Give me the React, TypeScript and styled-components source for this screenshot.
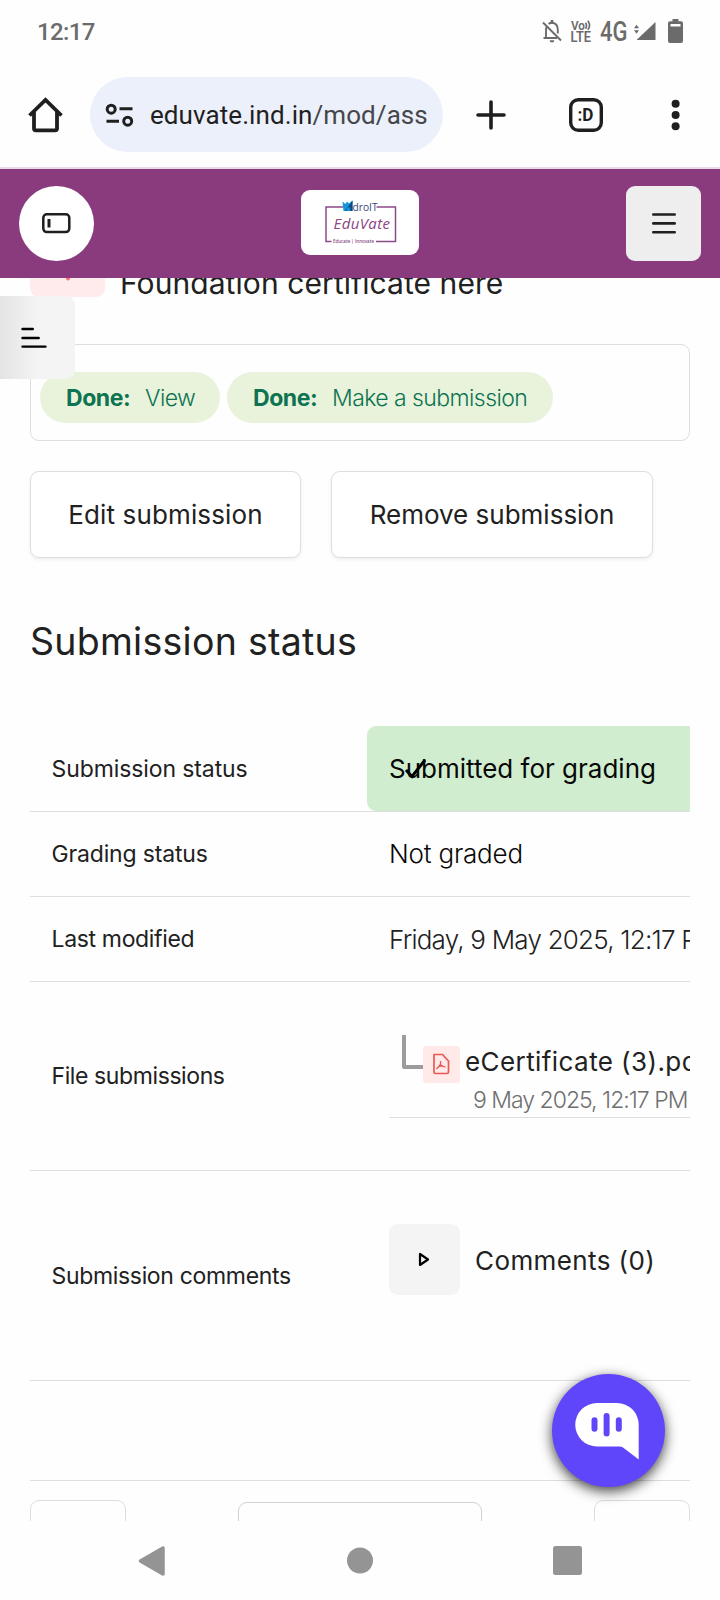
import React from 'react';
import styled, { createGlobalStyle } from 'styled-components';

const GlobalStyle = createGlobalStyle`
  * { box-sizing: border-box; }
  body { margin: 0; background: #fff; }
  svg { display: block; flex: none; }
  button { font: inherit; margin: 0; padding: 0; }
`;

const Screen = styled.div`
  width: 720px;
  height: 1600px;
  display: flex;
  flex-direction: column;
  background: #fefefe;
  color: #212121;
  font-family: Inter, 'Noto Sans', sans-serif;
  overflow: hidden;
`;

const StatusBar = styled.div`
  height: 64px;
  padding: 0 37px 1px 37px;
  display: flex;
  align-items: center;
  justify-content: space-between;
  color: #6b6b6b;
  font-family: Roboto, sans-serif;
`;

const Clock = styled.span`
  font-size: 24px;
  font-weight: 500;
  letter-spacing: -0.6px;
  padding-top: 1px;
`;

const StatusIcons = styled.div`
  display: flex;
  align-items: center;
  padding-bottom: 1px;
`;

const StatusIcon = styled.span<{ $gap: number }>`
  margin-left: ${(p) => p.$gap}px;
`;

const Browser = styled.div`
  height: 103px;
  padding: 0 39px 2px 27px;
  display: flex;
  align-items: center;
`;

const UrlPill = styled.div`
  width: 353px;
  height: 75px;
  margin: 0 33px 0 26px;
  padding: 0 0 0 15px;
  display: flex;
  align-items: center;
  gap: 15px;
  border-radius: 38px;
  background: #ecf0fa;
`;

const Url = styled.span`
  font-family: Roboto, sans-serif;
  font-size: 26px;
  letter-spacing: 0.08px;
  color: #1f1f1f;
  white-space: nowrap;
`;

const UrlPath = styled.span`
  color: #45474a;
`;

const BrowserActions = styled.div`
  flex: 1;
  display: grid;
  grid-template-columns: 93px 1fr auto;
  align-items: center;
`;

const Header = styled.header`
  height: 111px;
  padding: 0 19px;
  border-top: 2px solid #e9dce8;
  display: flex;
  align-items: center;
  justify-content: space-between;
  background: #8a3b7e;
`;

const HeaderButton = styled.button<{ $round?: boolean }>`
  width: 75px;
  height: 75px;
  border: 0;
  border-radius: ${(p) => (p.$round ? '50%' : '9px')};
  background: ${(p) => (p.$round ? '#fff' : '#eeeeee')};
  display: flex;
  align-items: center;
  justify-content: center;
  padding-bottom: ${(p) => (p.$round ? 1 : 0)}px;
`;

const LogoCard = styled.div`
  width: 118px;
  height: 65px;
  border-radius: 9px;
  background: #fff;
  margin-bottom: 2px;
`;

const Page = styled.main`
  position: relative;
  height: 1243px;
  padding: 0 30px;
  overflow: hidden;
`;

const ActivityTitle = styled.div`
  height: 78px;
  margin-top: -56px;
  display: flex;
  align-items: flex-end;
  gap: 15px;
`;

const ActivityIcon = styled.div`
  width: 75px;
  height: 75px;
  margin-bottom: 3px;
  border-radius: 9px;
  background: #ffebeb;
  display: flex;
  align-items: flex-end;
  justify-content: center;
  padding-bottom: 16px;
`;

const ActivityName = styled.h1`
  margin: 0;
  font-size: 30px;
  line-height: 34px;
  font-weight: 400;
  letter-spacing: 0.07px;
`;

const Drawer = styled.button`
  position: absolute;
  left: 0;
  top: 18px;
  width: 75px;
  height: 83px;
  border: 0;
  border-radius: 0 9px 9px 0;
  background: linear-gradient(90deg, #e4e4e4, #f4f4f4 38px);
  display: flex;
  align-items: center;
  padding-left: 20px;
`;

const Completion = styled.section`
  height: 97px;
  margin-top: 44px;
  padding: 9px 9px 0;
  border: 1px solid #dedede;
  border-radius: 9px;
  display: flex;
  align-items: center;
  gap: 7px;
`;

const Pill = styled.div<{ $width: number }>`
  width: ${(p) => p.$width}px;
  height: 51px;
  padding: 1px 0 0 26px;
  border-radius: 26px;
  background: #e9f3dc;
  color: #0d7350;
  font-size: 23px;
  font-weight: 300;
  display: flex;
  align-items: center;
  white-space: nowrap;
`;

const PillState = styled.strong`
  width: 79px;
  font-weight: 700;
  letter-spacing: -0.45px;
`;

const PillName = styled.span`
  letter-spacing: -0.56px;
`;

const Actions = styled.div`
  display: flex;
  gap: 30px;
  margin-top: 30px;
`;

const ActionButton = styled.button<{ $width: number; $spacing: number }>`
  width: ${(p) => p.$width}px;
  height: 87px;
  border: 1px solid #dedede;
  border-radius: 9px;
  background: #fff;
  box-shadow: 0 2px 4px rgba(0, 0, 0, 0.06);
  color: #212121;
  font-size: 26px;
  letter-spacing: ${(p) => p.$spacing}px;
`;

const SectionTitle = styled.h2`
  margin: 58px 0 0;
  height: 110px;
  font-size: 37.5px;
  line-height: 51px;
  font-weight: 400;
  letter-spacing: 0.27px;
`;

const Table = styled.div`
  width: 660px;
  overflow: hidden;
`;

const Row = styled.div<{ $height: number }>`
  height: ${(p) => p.$height}px;
  border-bottom: 1px solid #dedede;
  display: flex;
  align-items: stretch;
`;

const Label = styled.div<{ $spacing: number }>`
  width: 337px;
  flex: none;
  padding-left: 21.5px;
  display: flex;
  align-items: center;
  font-size: 23px;
  letter-spacing: ${(p) => p.$spacing}px;
`;

const Value = styled.div<{ $done?: boolean; $spacing: number; $black?: boolean; $lift?: number }>`
  position: relative;
  width: 440px;
  flex: none;
  padding: 0 0 ${(p) => p.$lift ?? 0}px 22px;
  display: flex;
  align-items: center;
  font-size: 26px;
  font-weight: ${(p) => (p.$done ? 400 : 350)};
  letter-spacing: ${(p) => p.$spacing}px;
  white-space: nowrap;
  color: ${(p) => (p.$black ? '#080808' : '#212121')};
  background: ${(p) => (p.$done ? '#d0eecf' : 'transparent')};
  border-radius: 9px;
`;

const CheckMark = styled.svg`
  position: absolute;
  left: 37px;
  top: 32px;
`;

const FileValue = styled.div`
  flex: none;
  width: 420px;
  margin: 53px 0 0 22px;
  height: 83px;
  border-bottom: 1px solid #dedede;
`;

const FileLine = styled.div`
  display: flex;
  height: 50px;
`;

const Branch = styled.div`
  width: 21px;
  height: 34px;
  margin-left: 13px;
  border-left: 4px solid #9c9c9c;
  border-bottom: 4px solid #9c9c9c;
  border-bottom-left-radius: 3px;
`;

const FileIcon = styled.div`
  width: 37px;
  height: 37px;
  margin-top: 11px;
  border-radius: 3px;
  background: #ffe9e9;
  display: flex;
  align-items: center;
  justify-content: center;
  padding: 0 1px 1px 0;
`;

const FileName = styled.span`
  margin: 11px 0 0 5px;
  font-size: 26px;
  line-height: 32px;
  white-space: nowrap;
  letter-spacing: 0.42px;
`;

const FileDate = styled.div`
  padding-left: 84px;
  font-size: 23px;
  line-height: 30px;
  font-weight: 300;
  letter-spacing: -0.99px;
  color: #6f6f6f;
`;

const CommentToggle = styled.div`
  display: flex;
  align-items: center;
  gap: 15px;
  height: 71px;
  margin: 53px 0 0 22px;
  font-size: 26px;
  letter-spacing: 0.4px;
`;

const CommentCount = styled.span`
  padding-top: 2px;
`;

const ToggleBox = styled.span`
  width: 71px;
  height: 71px;
  border-radius: 9px;
  background: #f4f4f4;
  display: flex;
  align-items: center;
  justify-content: center;
  padding-right: 1px;
`;

const Pager = styled.div`
  display: flex;
  justify-content: space-between;
  margin-top: 19px;
`;

const PagerItem = styled.div<{ $width: number; $select?: boolean }>`
  width: ${(p) => p.$width}px;
  height: 80px;
  margin-top: ${(p) => (p.$select ? 2 : 0)}px;
  border: 1px solid ${(p) => (p.$select ? '#d2d2d2' : '#dedede')};
  border-radius: 9px;
`;

const ChatButton = styled.button`
  position: absolute;
  left: 552px;
  top: 1096px;
  width: 113px;
  height: 113px;
  border: 0;
  border-radius: 50%;
  background: #6046fa;
  box-shadow: 0 4px 13px rgba(0, 0, 0, 0.75);
`;

const NavBar = styled.nav`
  height: 79px;
  padding: 0 138px;
  display: flex;
  align-items: center;
  justify-content: space-between;
`;

const BellOff = () => (
  <svg width="20" height="24" viewBox="0 0 20 24" fill="none" stroke="currentColor" strokeWidth="1.9">
    <path d="M1 3.500 19 21.500M4 19V10.500q0-1.700.8-3M1.500 19H15M6.600 5Q8 3.800 10 3.800q5.800.7 5.800 6.800v4" />
    <path d="M10 1v3" strokeWidth="2.600" />
    <path d="M7.700 21.300h4.600a2.300 2.300 0 0 1-4.600 0Z" fill="currentColor" stroke="none" />
  </svg>
);

const VoLte = () => (
  <svg width="22" height="24" viewBox="0 0 22 24" fill="currentColor" fontFamily="Roboto, sans-serif" fontWeight="600">
    <text x="1" y="10.500" fontSize="12.500" textLength="14" lengthAdjust="spacingAndGlyphs">Vo</text>
    <path d="M15.500 3.800q2 3 0 6M17.800 1.800q3.500 4.500 0 9" fill="none" stroke="currentColor" strokeWidth="1.600" />
    <text x="0.500" y="22.500" fontSize="14.500" textLength="20.500" lengthAdjust="spacingAndGlyphs">LTE</text>
  </svg>
);

const FourG = () => (
  <svg width="30" height="34" viewBox="0 0 30 34" fill="currentColor" fontFamily="Roboto, sans-serif">
    <text x="1" y="26.500" fontSize="27" fontWeight="500" textLength="27.500" lengthAdjust="spacingAndGlyphs">4G</text>
  </svg>
);

const Signal = () => (
  <svg width="24" height="24" viewBox="0 0 24 24" fill="currentColor">
    <path d="M22.500 3v18H3.500ZM1 9.200 3.500 5.800 6 9.200ZM1 11.200h5L3.500 14.700Z" />
  </svg>
);

const Battery = () => (
  <svg width="15" height="24" viewBox="0 0 15 24" fill="currentColor">
    <path fillRule="evenodd" d="M4.500 0h6v2.200H13q2 0 2 2V22q0 2-2 2H2q-2 0-2-2V4.200q0-2 2-2h2.500ZM2.500 5v2.600h10V5Z" />
  </svg>
);

const Home = () => (
  <svg width="37" height="38" viewBox="0 0 37 38" fill="none" stroke="#1f1f1f" strokeWidth="3.800">
    <path d="M2.500 19.500 18.500 4 34.500 19.500" />
    <path d="M7 15.500V32.500q0 1.800 1.800 1.800H28.200q1.800 0 1.800-1.800V15.500" />
  </svg>
);

const SiteSettings = () => (
  <svg width="30" height="26" viewBox="0 0 30 26" fill="none" stroke="#1f1f1f" strokeWidth="3">
    <circle cx="6.200" cy="7.200" r="4" />
    <path d="M14.500 6.700h13M1.500 19.300h12.500" />
    <circle cx="22.700" cy="19.200" r="4" />
  </svg>
);

const Plus = () => (
  <svg width="30" height="30" viewBox="0 0 30 30" stroke="#1f1f1f" strokeWidth="3.600" strokeLinecap="round">
    <path d="M15 2v26M2 15h26" />
  </svg>
);

const Tabs = () => (
  <svg width="34" height="34" viewBox="0 0 34 34">
    <rect x="1.700" y="1.700" width="30.600" height="30.600" rx="7.500" fill="none" stroke="#1f1f1f" strokeWidth="3.400" />
    <text x="8.500" y="22.500" fontFamily="Roboto, sans-serif" fontSize="18" fontWeight="700" fill="#1f1f1f" textLength="16" lengthAdjust="spacingAndGlyphs">:D</text>
  </svg>
);

const Dots = () => (
  <svg width="10" height="32" viewBox="0 0 10 32" fill="#1f1f1f">
    <circle cx="4.600" cy="4.700" r="4" />
    <circle cx="4.600" cy="16" r="4" />
    <circle cx="4.600" cy="27.300" r="4" />
  </svg>
);

const PanelIcon = () => (
  <svg width="29" height="21" viewBox="0 0 29 21" fill="none" stroke="#1f1f1f">
    <rect x="1.300" y="1.300" width="26" height="17.800" rx="3.500" strokeWidth="2.500" />
    <path d="M7 6v8.500" strokeWidth="3" />
  </svg>
);

const MenuIcon = () => (
  <svg width="24" height="24" viewBox="0 0 24 24" stroke="#1f1f1f" strokeWidth="2.600" strokeLinecap="round">
    <path d="M1.300 2.500h21.400M1.300 11.400h21.400M1.300 20.200h21.400" />
  </svg>
);

const IndexIcon = () => (
  <svg width="27" height="22" viewBox="0 0 27 22" stroke="#000" strokeWidth="2.400" strokeLinecap="round">
    <path d="M2.500 2h10.300M2.500 11h16.200M2.500 19.600h23" />
  </svg>
);

const Logo = () => (
  <svg width="118" height="65" viewBox="0 0 118 65">
    <path d="M42 17H25v34.500h5.500M75.500 17H94.500v34.500H75" fill="none" stroke="#8a4a86" strokeWidth="1.500" />
    <path d="M41.500 11.500 44.500 14l1.500-2.500 2 2 3.500-3v10.500H42.500Z" fill="#1295dc" />
    <path d="m44 21 7.500-10.500V21h-2.300v-3.500h-2.500L45.200 21Z" fill="#124b82" />
    <text x="51.500" y="20.500" fontFamily="Open Sans, sans-serif" fontSize="11.500" fontWeight="500" fill="#364577" textLength="25" lengthAdjust="spacingAndGlyphs">droIT</text>
    <text x="32.500" y="38.500" fontFamily="Open Sans, sans-serif" fontStyle="italic" fontWeight="500" fontSize="15" fill="#8b4384" textLength="56.500">EduVate</text>
    <text x="32" y="52.500" fontFamily="Open Sans, sans-serif" fontSize="5" fontWeight="600" fill="#8a4a86" textLength="41" lengthAdjust="spacingAndGlyphs">Educate | Innovate</text>
  </svg>
);

const PdfIcon = () => (
  <svg width="18" height="22" viewBox="0 0 18 22" fill="none" stroke="#ea5a52" strokeWidth="1.700" strokeLinejoin="round">
    <path d="M2 1.500h8.500L16.500 8v11q0 1.500-1.500 1.500H3.500Q2 20.500 2 19Z" />
    <path d="M8.500 8v3.500L4.500 16M8.500 11.500q1.500 2.500 5 2.300M7 13.500l4-.8" strokeWidth="1.300" />
  </svg>
);

const ChatIcon = () => (
  <svg width="113" height="113" viewBox="0 0 113 113">
    <path d="M45 29H65a21.700 21.700 0 0 1 21.700 21.700V85.500L71 73.500q-1.500-1-3.500-1H45A21.750 21.750 0 0 1 45 29Z" fill="#fff" />
    <path d="M42.500 46.200v8.600M54.600 42v17.500M66.800 46.200v8.600" stroke="#6046fa" strokeWidth="6" strokeLinecap="round" />
  </svg>
);

export default function App() {
  return (
    <>
      <GlobalStyle />
      <Screen>
        <StatusBar>
          <Clock>12:17</Clock>
          <StatusIcons>
            <StatusIcon $gap={0}><BellOff /></StatusIcon>
            <StatusIcon $gap={8}><VoLte /></StatusIcon>
            <StatusIcon $gap={7}><FourG /></StatusIcon>
            <StatusIcon $gap={4}><Signal /></StatusIcon>
            <StatusIcon $gap={11}><Battery /></StatusIcon>
          </StatusIcons>
        </StatusBar>
        <Browser>
          <Home />
          <UrlPill>
            <SiteSettings />
            <Url>
              eduvate.ind.in<UrlPath>/mod/ass</UrlPath>
            </Url>
          </UrlPill>
          <BrowserActions>
            <Plus />
            <Tabs />
            <Dots />
          </BrowserActions>
        </Browser>
        <Header>
          <HeaderButton $round aria-label="Toggle panel"><PanelIcon /></HeaderButton>
          <LogoCard><Logo /></LogoCard>
          <HeaderButton aria-label="Menu"><MenuIcon /></HeaderButton>
        </Header>
        <Page>
          <ActivityTitle>
            <ActivityIcon>
              <svg width="4" height="5" viewBox="0 0 4 5"><path d="M0 0h4v3q-2 3-4 0Z" fill="#f5766c" /></svg>
            </ActivityIcon>
            <ActivityName>Foundation certificate here</ActivityName>
          </ActivityTitle>
          <Completion>
            <Pill $width={180}><PillState>Done:</PillState><PillName>View</PillName></Pill>
            <Pill $width={326}><PillState>Done:</PillState><PillName>Make a submission</PillName></Pill>
          </Completion>
          <Actions>
            <ActionButton $width={271} $spacing={0.14}>Edit submission</ActionButton>
            <ActionButton $width={322} $spacing={0}>Remove submission</ActionButton>
          </Actions>
          <SectionTitle>Submission status</SectionTitle>
          <Table>
            <Row $height={86}>
              <Label $spacing={-0.1}>Submission status</Label>
              <Value $done $black $spacing={0}>
                Submitted for grading
                <CheckMark width="24" height="22" viewBox="0 0 24 22" fill="none" stroke="#000" strokeWidth="3">
                  <path d="M2 12l6 6.500L21 2" />
                </CheckMark>
              </Value>
            </Row>
            <Row $height={85}>
              <Label $spacing={-0.16}>Grading status</Label>
              <Value $black $spacing={-0.2} $lift={2}>Not graded</Value>
            </Row>
            <Row $height={85}>
              <Label $spacing={-0.34}>Last modified</Label>
              <Value $spacing={-0.78}>Friday, 9 May 2025, 12:17 PM</Value>
            </Row>
            <Row $height={189}>
              <Label $spacing={-0.4}>File submissions</Label>
              <FileValue>
                <FileLine>
                  <Branch />
                  <FileIcon><PdfIcon /></FileIcon>
                  <FileName>eCertificate (3).pdf</FileName>
                </FileLine>
                <FileDate>9 May 2025, 12:17 PM</FileDate>
              </FileValue>
            </Row>
            <Row $height={210}>
              <Label $spacing={-0.33}>Submission comments</Label>
              <CommentToggle>
                <ToggleBox>
                  <svg width="12" height="15" viewBox="0 0 12 15" fill="none" stroke="#000" strokeWidth="2.200" strokeLinejoin="round">
                    <path d="M2 2v11l8-5.500Z" />
                  </svg>
                </ToggleBox>
                <CommentCount>Comments (0)</CommentCount>
              </CommentToggle>
            </Row>
            <Row $height={100} />
          </Table>
          <Pager>
            <PagerItem $width={96} />
            <PagerItem $width={244} $select />
            <PagerItem $width={96} />
          </Pager>
          <Drawer aria-label="Course index"><IndexIcon /></Drawer>
          <ChatButton aria-label="Chat"><ChatIcon /></ChatButton>
        </Page>
        <NavBar>
          <svg width="28" height="32" viewBox="0 0 28 32"><path d="M2.500 16 25 3v26Z" fill="#949494" stroke="#949494" strokeWidth="3.500" strokeLinejoin="round" /></svg>
          <svg width="27" height="27" viewBox="0 0 27 27"><circle cx="14" cy="13.500" r="13" fill="#949494" /></svg>
          <svg width="29" height="29" viewBox="0 0 29 29"><rect width="29" height="29" rx="2.500" fill="#949494" /></svg>
        </NavBar>
      </Screen>
    </>
  );
}
